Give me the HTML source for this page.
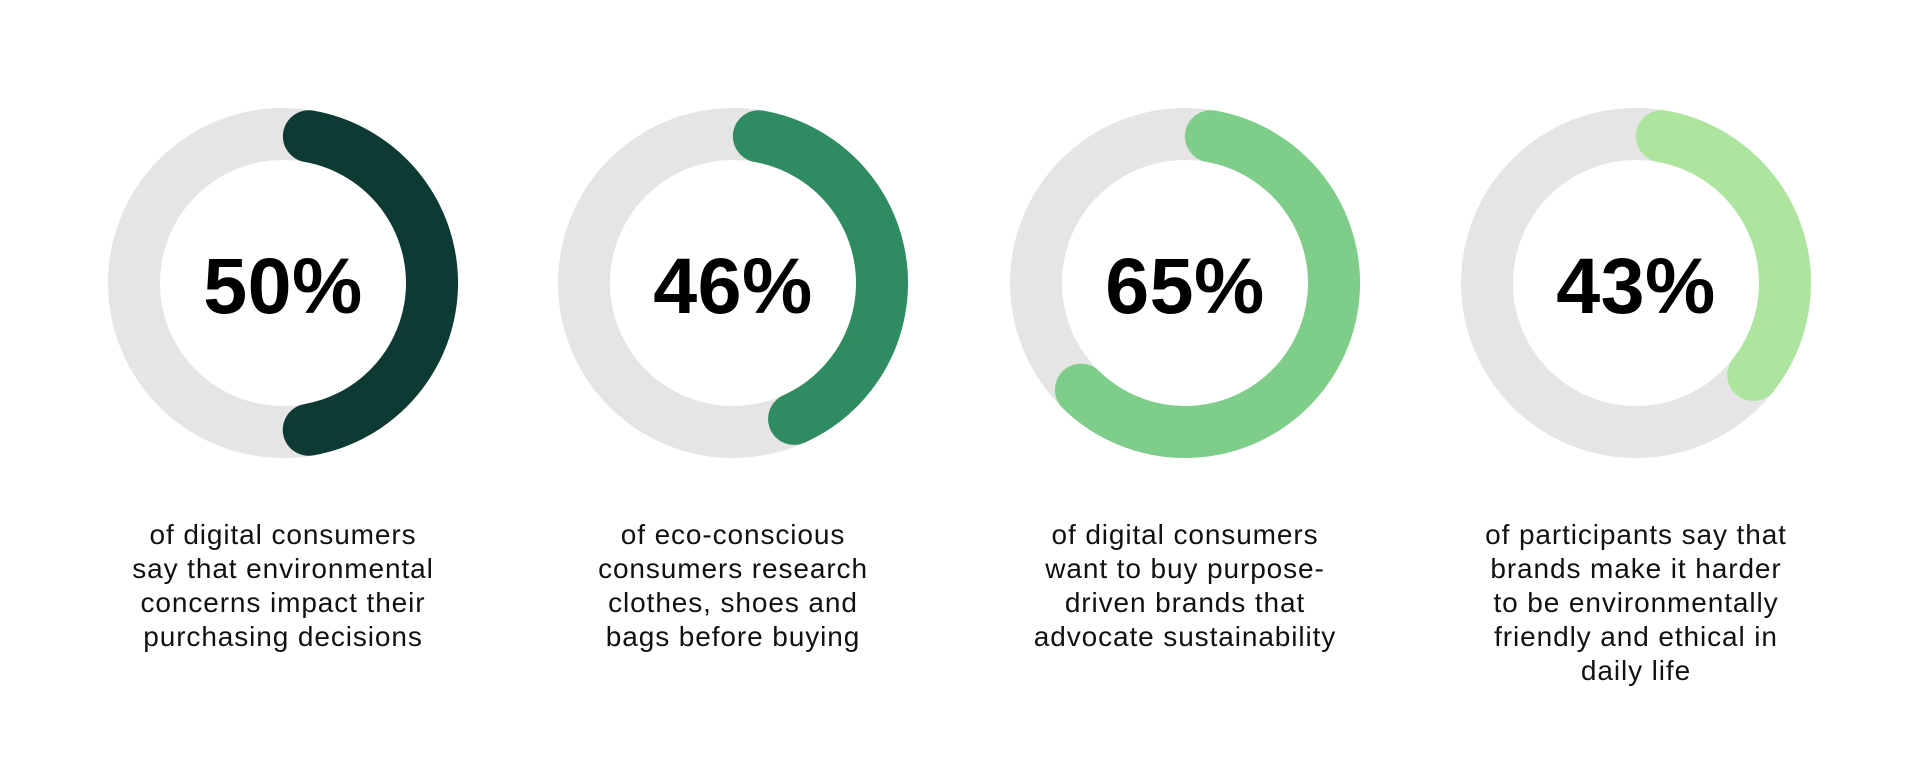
<!DOCTYPE html>
<html><head><meta charset="utf-8"><style>
html,body{margin:0;padding:0;background:#fff;width:1920px;height:772px;overflow:hidden}
.item{position:absolute;top:0;width:500px;margin-left:-250px}
svg{position:absolute;left:75px;top:108px}
.num{position:absolute;left:0;width:500px;top:240px;text-align:center;font:bold 79px "Liberation Sans",sans-serif;color:#000;letter-spacing:0.5px}
.desc{position:absolute;left:0;width:500px;top:518px;text-align:center;font:28px/34px "Liberation Sans",sans-serif;color:#111;letter-spacing:0.9px}
</style></head><body>
<div class="item" style="left:283px">
<svg width="350" height="350" viewBox="0 0 350 350"><circle cx="175" cy="175" r="149" fill="none" stroke="#e5e5e5" stroke-width="52"/><circle cx="175" cy="175" r="149" fill="none" stroke="#0d3b33" stroke-width="52" stroke-linecap="round" stroke-dasharray="416 1000" transform="rotate(-80 175 175)"/></svg>
<div class="num">50%</div>
<div class="desc">of digital consumers<br>say that environmental<br>concerns impact their<br>purchasing decisions</div></div>
<div class="item" style="left:733px">
<svg width="350" height="350" viewBox="0 0 350 350"><circle cx="175" cy="175" r="149" fill="none" stroke="#e5e5e5" stroke-width="52"/><circle cx="175" cy="175" r="149" fill="none" stroke="#2e8b62" stroke-width="52" stroke-linecap="round" stroke-dasharray="379 1000" transform="rotate(-80 175 175)"/></svg>
<div class="num">46%</div>
<div class="desc">of eco-conscious<br>consumers research<br>clothes, shoes and<br>bags before buying</div></div>
<div class="item" style="left:1185px">
<svg width="350" height="350" viewBox="0 0 350 350"><circle cx="175" cy="175" r="149" fill="none" stroke="#e5e5e5" stroke-width="52"/><circle cx="175" cy="175" r="149" fill="none" stroke="#7ecd88" stroke-width="52" stroke-linecap="round" stroke-dasharray="557 1000" transform="rotate(-80 175 175)"/></svg>
<div class="num">65%</div>
<div class="desc">of digital consumers<br>want to buy purpose-<br>driven brands that<br>advocate sustainability</div></div>
<div class="item" style="left:1636px">
<svg width="350" height="350" viewBox="0 0 350 350"><circle cx="175" cy="175" r="149" fill="none" stroke="#e5e5e5" stroke-width="52"/><circle cx="175" cy="175" r="149" fill="none" stroke="#ade59f" stroke-width="52" stroke-linecap="round" stroke-dasharray="307 1000" transform="rotate(-80 175 175)"/></svg>
<div class="num">43%</div>
<div class="desc">of participants say that<br>brands make it harder<br>to be environmentally<br>friendly and ethical in<br>daily life</div></div>
</body></html>
